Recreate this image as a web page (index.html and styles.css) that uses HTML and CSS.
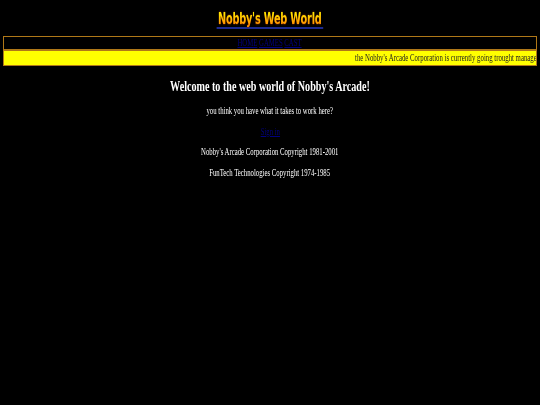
FILE: index.html
```html
<!DOCTYPE html>
<html lang="en">
<head>
    <meta charset="UTF-8">
    <title>Nobby's Web World</title>
    <link rel="stylesheet" href="styles.css">
</head>
<body>
    <div class="logo">
        <a href="#" class="logo-link"><span class="logo-text">Nobby's Web World</span></a>
    </div>

    <div class="nav-bar">
        <span class="squeeze"><a href="#">HOME</a> <a href="#">GAMES</a> <a href="#">CAST</a></span>
    </div>
    <div class="ticker">
        <span class="ticker-text">the Nobby's Arcade Corporation is currently going trought management changes, please be patient while we update the site</span>
    </div>

    <div class="content">
        <h2><span class="squeeze">Welcome to the web world of Nobby's Arcade!</span></h2>
        <p><span class="squeeze">you think you have what it takes to work here?</span></p>
        <p><span class="squeeze"><a href="#">Sign in</a></span></p>
        <p><span class="squeeze">Nobby's Arcade Corporation Copyright 1981-2001</span></p>
        <p><span class="squeeze">FunTech Technologies Copyright 1974-1985</span></p>
    </div>
</body>
</html>
```

FILE: styles.css
```css
body { margin: 0; padding: 10px 3px; background-color: #000; color: #fff; font-family: "Liberation Serif", "Times New Roman", serif; }
a { color: #000080; }

.logo { text-align: center; height: 26px; }
.logo-link {
    display: inline-block;
    border-bottom: 2px solid #1c2a90;
    text-decoration: none;
    padding: 0 2px;
    line-height: 16px;
    transform: scaleX(0.65);
}
.logo-text {
    display: inline-block;
    font-family: "DejaVu Sans", sans-serif;
    font-weight: bold;
    font-size: 15px;
    letter-spacing: -0.3px;
    background: linear-gradient(#ffe400 20%, #ff8c00 85%);
    -webkit-background-clip: text;
    background-clip: text;
    color: transparent;
    filter: drop-shadow(0 0 1px #8a2a00);
}

.squeeze { display: inline-block; transform: scaleX(0.675); white-space: nowrap; }

.nav-bar {
    border: 1px solid #b07818;
    background-color: #000;
    text-align: center;
    font-size: 10px;
    height: 12px;
    line-height: 12px;
}
.ticker {
    border: 1px solid #b07818;
    background-color: #ffff00;
    color: #222;
    font-size: 10px;
    height: 14px;
    line-height: 14px;
    overflow: hidden;
    white-space: nowrap;
}
.ticker-text { display: inline-block; padding-left: 351px; transform: scaleX(0.68); transform-origin: 351px 0; }

.content { text-align: center; padding-top: 10px; }
.content h2 { font-size: 15px; margin: 0 0 9px; line-height: 20px; }
.content p { font-size: 10px; margin: 0 0 8.5px; line-height: 12px; }
```
